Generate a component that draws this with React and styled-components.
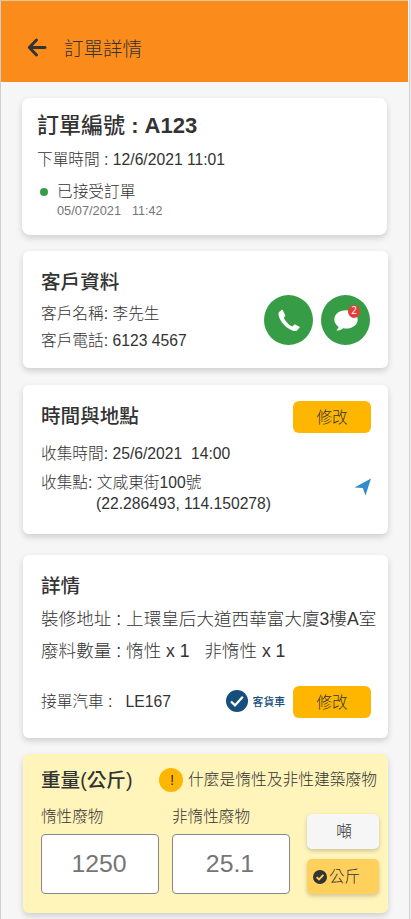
import React, { useState } from 'react';
import styled, { createGlobalStyle } from 'styled-components';

const GlobalStyle = createGlobalStyle`
  * {
    box-sizing: border-box;
  }
  body {
    margin: 0;
    background-color: #e9e9e9;
    color: #333;
    font-family: 'Liberation Sans', 'Noto Sans CJK TC', sans-serif;
    font-weight: 300;
  }
  button,
  input {
    font-family: inherit;
    font-weight: inherit;
    color: inherit;
    padding: 0;
    border: none;
  }
`;

const Screen = styled.div`
  width: 410px;
  height: 919px;
  overflow: hidden;
  background-color: #f6f6f6;
  border-left: 1px solid #cecece;
  border-right: 1px solid #d2d2d2;
`;

const Header = styled.header`
  display: flex;
  align-items: center;
  height: 82px;
  margin-right: 1px;
  padding: 11px 0 0 26px;
  gap: 17px;
  background-color: #fb8c1b;
  border-top: 1px solid #e6c7a0;
  font-size: 19.5px;

  svg {
    display: block;
  }
`;

const Cards = styled.main`
  display: flex;
  flex-direction: column;
  padding-left: 22px;
`;

const Card = styled.section`
  width: 365px;
  height: ${({ $height }) => $height}px;
  margin-top: ${({ $top }) => $top}px;
  margin-left: ${({ $shift }) => $shift || 0}px;
  padding: ${({ $padding }) => $padding || '0 17px 0 18px'};
  background-color: ${({ $color }) => $color || '#fff'};
  border-radius: ${({ $radius }) => $radius || 6}px;
  box-shadow: 0 3px 6px rgba(0, 0, 0, 0.16);
`;

const Row = styled.div`
  display: flex;
  align-items: ${({ $align }) => $align || 'center'};
  justify-content: space-between;
  margin-top: ${({ $top }) => $top || 0}px;
`;

const Title = styled.h2`
  margin: ${({ $top }) => $top || 0}px 0 0;
  font-size: ${({ $size }) => $size || 19.6}px;
  font-weight: 500;
  line-height: 30px;
  white-space: pre;
`;

const Text = styled.p`
  margin: ${({ $top }) => $top || 0}px 0 0 ${({ $left }) => $left || 0}px;
  font-size: ${({ $size }) => $size || 15.7}px;
  line-height: ${({ $line }) => $line || 22}px;
  white-space: pre;
`;

const Status = styled.div`
  display: grid;
  grid-template-columns: 20px auto;
  align-items: center;
  justify-content: start;
  margin-top: 10px;
`;

const Dot = styled.span`
  width: 8px;
  height: 8px;
  margin-left: 3px;
  margin-top: 1px;
  border-radius: 50%;
  background-color: #369d46;
`;

const Stamp = styled.div`
  grid-column: 2;
  display: flex;
  gap: 11px;
  margin-top: -1px;
  font-size: 12.8px;
  line-height: 17px;
  color: #757575;

  span + span {
    font-size: 12.5px;
    padding-top: 1px;
  }
`;

const Contacts = styled.div`
  display: flex;
  gap: 8px;
  margin: 44px 1px 0 0;
`;

const RoundButton = styled.button`
  position: relative;
  display: flex;
  align-items: center;
  justify-content: center;
  width: 49px;
  height: 50px;
  border-radius: 50%;
  background-color: #369d46;
`;

const Badge = styled.span`
  position: absolute;
  top: 10px;
  left: 27px;
  width: 12px;
  height: 13px;
  border-radius: 50%;
  background-color: #e83b3b;
  color: #fff;
  font-family: 'Open Sans', sans-serif;
  font-size: 10px;
  font-weight: 500;
  line-height: 11px;
  text-align: center;
`;

const EditButton = styled.button`
  width: 78px;
  height: 32px;
  border-radius: 6px;
  background-color: #ffb600;
  font-size: 15.6px;
  line-height: 33px;
`;

const Vehicle = styled.div`
  display: flex;
  align-items: center;
  gap: 5px;
  margin-right: 8px;
  color: #174f7c;
  font-size: 10.8px;
  font-weight: 500;
  line-height: 16px;

  svg {
    margin-bottom: 1px;
  }
`;

const Hint = styled.div`
  display: flex;
  align-items: center;
  gap: 5px;
  font-size: 15.75px;
  line-height: 22px;
  white-space: nowrap;
`;

const HintMark = styled.span`
  width: 24px;
  height: 24px;
  border-radius: 50%;
  background-color: #ffb600;
  font-size: 15px;
  line-height: 23px;
  text-align: center;
  padding-left: 2px;
`;

const WeightForm = styled.div`
  display: flex;
  gap: 13px;
  margin-top: 11px;
`;

const Field = styled.label`
  display: flex;
  flex-direction: column;
  font-size: 15.6px;
  line-height: 22px;
`;

const WeightInput = styled.input`
  width: 118px;
  height: 60px;
  margin-top: 6px;
  border: 1px solid #888;
  border-radius: 4px;
  background-color: #fff;
  color: #757575;
  font-size: 24.8px;
  text-align: center;
  padding-right: 2px;
`;

const Units = styled.div`
  display: flex;
  flex-direction: column;
  gap: 10px;
  margin: 8px 0 0 4px;
`;

const UnitButton = styled.button`
  display: flex;
  align-items: center;
  justify-content: ${({ $active }) => ($active ? 'flex-start' : 'center')};
  gap: 2px;
  width: 72px;
  height: 35px;
  padding-left: ${({ $active }) => ($active ? 6 : 2)}px;
  border-radius: 5px;
  background-color: ${({ $active }) => ($active ? '#ffd15c' : '#f6f6f6')};
  box-shadow: 0 2px 4px rgba(0, 0, 0, 0.2);
  font-size: 15.6px;
  line-height: 33px;
`;

function BackIcon() {
  return (
    <svg width="20" height="19" viewBox="0 0 20 19" fill="none">
      <path
        d="M18 9.5H3M9.5 2L2.3 9.5l7.2 7.5"
        stroke="#333"
        strokeWidth="2.9"
        strokeLinecap="round"
        strokeLinejoin="round"
      />
    </svg>
  );
}

function PhoneIcon() {
  return (
    <svg width="24" height="24" viewBox="0 0 24 24" fill="#fff">
      <path d="M4.8 1.8 1.8 4.3C.9 6.8 2.5 11.8 6.5 16.2c4.2 4.5 9.2 7.2 13 6.9L22.7 19.5l-.2-.7-4.4-2.2c-.5-.2-.9-.1-1.2.3l-1.5 1.5C12.3 17.2 8.3 13.3 6.9 9.9l1.200-1.900c.2-.4.1-.8-.1-1.200L5.700 2c-.2-.3-.6-.4-.9-.2Z" />
    </svg>
  );
}

function ChatIcon() {
  return (
    <svg width="24" height="22" viewBox="0 0 24 22" fill="#fff">
      <path d="M12 1.2C5.4 1.2.3 5 .3 10.5c0 3.1 1.6 5.5 4.2 7.2-.2 1.5-1 2.700-2.300 3.900 2.700.1 5.100-.8 6.900-2.300 1 .2 1.900.3 2.900.3 6.600 0 11.700-3.800 11.700-9.100S18.600 1.200 12 1.200Z" />
    </svg>
  );
}

function CheckIcon() {
  return (
    <svg width="22" height="22" viewBox="0 0 22 22" fill="none">
      <circle cx="11" cy="11" r="11" fill="#174f7c" />
      <path d="M5 11.5l4 3.9 7.8-8.6" stroke="#fff" strokeWidth="2.3" />
    </svg>
  );
}

function UnitCheckIcon() {
  return (
    <svg width="14" height="14" viewBox="0 0 14 14" fill="none">
      <circle cx="7" cy="7" r="7" fill="#333" />
      <path d="M3.6 7.1l2.4 2.3 4.4-4.5" stroke="#ffd15c" strokeWidth="1.9" />
    </svg>
  );
}

const LocationIcon = styled(({ className }) => (
  <svg className={className} width="18" height="18" viewBox="0 0 18 18" fill="#348bca">
    <path d="M17 .5.5 9.5l8.3.6 2.7 7.4Z" />
  </svg>
))`
  margin: 0 -1px 4px 0;
`;

function App() {
  const [unit, setUnit] = useState('公斤');
  const [inert, setInert] = useState('1250');
  const [nonInert, setNonInert] = useState('25.1');

  return (
    <Screen>
      <GlobalStyle />
      <Header>
        <BackIcon />
        訂單詳情
      </Header>

      <Cards>
        <Card $top={15.5} $height={137.5} $padding="13px 15px 0" $shift={-1} $radius={8}>
          <Title $size={22}>
            訂單編號<b> : A123</b>
          </Title>
          <Text $top={8}>下單時間 : 12/6/2021 11:01</Text>
          <Status>
            <Dot />
            <Text>已接受訂單</Text>
            <Stamp>
              <span>05/07/2021</span>
              <span>11:42</span>
            </Stamp>
          </Status>
        </Card>

        <Card $top={16} $height={116.5}>
          <Row $align="flex-start">
            <div>
              <Title $top={16}>客戶資料</Title>
              <Text $top={6}>客戶名稱: 李先生</Text>
              <Text $top={5}>客戶電話: 6123 4567</Text>
            </div>
            <Contacts>
              <RoundButton>
                <PhoneIcon />
              </RoundButton>
              <RoundButton>
                <ChatIcon />
                <Badge>2</Badge>
              </RoundButton>
            </Contacts>
          </Row>
        </Card>

        <Card $top={17} $height={149.5} $padding="16px 17px 0 18px">
          <Row $align="flex-start">
            <Title>時間與地點</Title>
            <EditButton>修改</EditButton>
          </Row>
          <Text $top={10}>收集時間: 25/6/2021  14:00</Text>
          <Row>
            <div>
              <Text $top={7}>收集點: 文咸東街100號</Text>
              <Text $left={55} $line={20}>(22.286493, 114.150278)</Text>
            </div>
            <LocationIcon />
          </Row>
        </Card>

        <Card $top={20.5} $height={183.5} $padding="16px 17px 0 18px">
          <Title>詳情</Title>
          <Text $size={17.6} $top={6} $line={24}>裝修地址 : 上環皇后大道西華富大廈3樓A室</Text>
          <Text $size={17.6} $top={8} $line={24}>廢料數量 : 惰性 x 1   非惰性 x 1</Text>
          <Row $top={23}>
            <Text $top={1}>接單汽車 :   LE167</Text>
            <Row>
              <Vehicle>
                <CheckIcon />
                客貨車
              </Vehicle>
              <EditButton>修改</EditButton>
            </Row>
          </Row>
        </Card>

        <Card $top={16} $height={159} $color="#fff5bb" $padding="11px 11px 0 18px">
          <Row>
            <Title>重量(公斤)</Title>
            <Hint>
              <HintMark>!</HintMark>
              什麼是惰性及非性建築廢物
            </Hint>
          </Row>
          <WeightForm>
            <Field>
              惰性廢物
              <WeightInput value={inert} onChange={(e) => setInert(e.target.value)} />
            </Field>
            <Field>
              非惰性廢物
              <WeightInput value={nonInert} onChange={(e) => setNonInert(e.target.value)} />
            </Field>
            <Units>
              {['噸', '公斤'].map((name) => (
                <UnitButton key={name} $active={unit === name} onClick={() => setUnit(name)}>
                  {unit === name && <UnitCheckIcon />}
                  {name}
                </UnitButton>
              ))}
            </Units>
          </WeightForm>
        </Card>
      </Cards>
    </Screen>
  );
}

export default App;
